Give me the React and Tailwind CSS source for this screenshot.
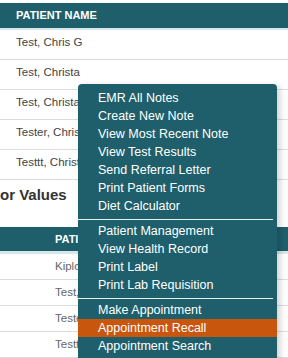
import React from 'react';

const topRows = ['Test, Chris G', 'Test, Christa', 'Test, Christa', 'Tester, Christa', 'Testtt, Christa'];
const bottomRows = ['Kiplov, Anna', 'Test, Chris', 'Tester, Chris', 'Testtt, Chris'];

const groups = [
  ['EMR All Notes', 'Create New Note', 'View Most Recent Note', 'View Test Results', 'Send Referral Letter', 'Print Patient Forms', 'Diet Calculator'],
  ['Patient Management', 'View Health Record', 'Print Label', 'Print Lab Requisition'],
  ['Make Appointment', 'Appointment Recall', 'Appointment Search'],
];

const ContextMenu = () => (
  <div className="absolute left-[78px] top-[84px] w-[199px] h-[290px] bg-[#1e5f6b] rounded-t-[4px] shadow-[3px_2px_6px_rgba(0,0,0,0.18)] pt-[5px]">
    {groups.map((items, gi) => (
      <div key={gi}>
        {gi > 0 && <div className="h-px bg-white/90 mt-[4px] mb-[2px] mr-[4px]" />}
        {items.map((label) => (
          <div
            key={label}
            className={`h-[18px] leading-[18px] pl-[20px] text-[12.5px] text-white ${label === 'Appointment Recall' ? 'bg-[#c8560d]' : ''}`}
          >
            {label}
          </div>
        ))}
      </div>
    ))}
  </div>
);

export default function App() {
  return (
    <div className="relative w-[288px] h-[358px] overflow-hidden bg-white" style={{ fontFamily: '"Liberation Sans", Arial, sans-serif' }}>
      {/* Patient table */}
      <div className="pt-[3px]">
        <div className="h-[25px] bg-[#1e5f6b] flex items-center px-4 text-[11px] font-bold text-white uppercase">
          Patient Name
        </div>
        <div className="h-[2px] bg-[#d6e6ea]" />
        {topRows.map((name, i) => (
          <div key={i} className="h-[30px] border-b border-[#dcdcdc] flex items-center pb-[3px] px-4 text-[11.5px] text-[#444] whitespace-nowrap">
            {name}
          </div>
        ))}
      </div>

      {/* Second section */}
      <div className="h-[47px] flex items-center pb-[16px] text-[15px] font-bold text-[#333]">
        or Values
      </div>
      <div className="h-[24px] bg-[#1e5f6b] flex items-center pl-[55px] text-[11px] font-bold text-white uppercase">
        Patient Name
      </div>
      <div className="h-[3px] bg-[#d6e6ea]" />
      {bottomRows.map((name, i) => (
        <div key={i} className="h-[26px] border-b border-[#dcdcdc] flex items-center pl-[55px] text-[11.5px] text-[#666] whitespace-nowrap">
          {name}
        </div>
      ))}

      <ContextMenu />
    </div>
  );
}
